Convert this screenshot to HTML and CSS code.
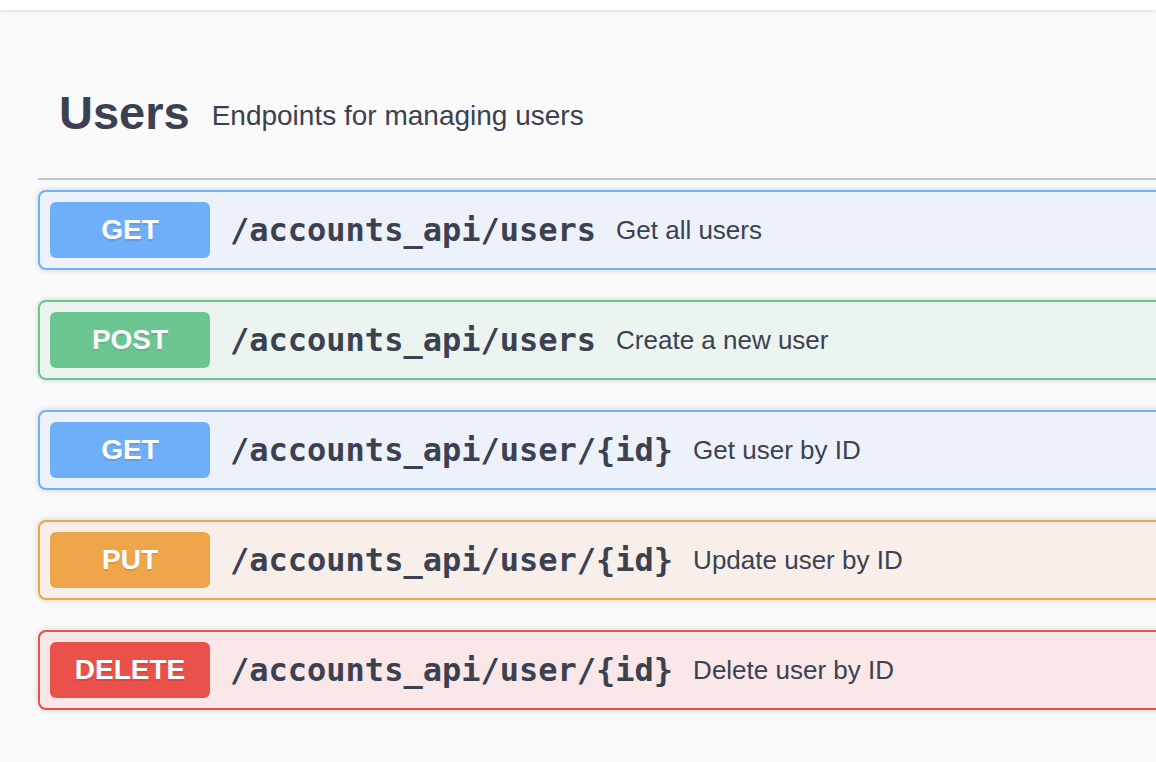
FILE: index.html
```html
<!DOCTYPE html>
<html lang="en">
<head>
<meta charset="utf-8">
<title>Users API</title>
<link rel="stylesheet" href="styles.css">
</head>
<body>
<div class="topbar"></div>
<main class="wrapper">
  <section class="tag-section">
    <div class="tag-header">
      <h3 class="tag-title">Users</h3>
      <span class="tag-desc">Endpoints for managing users</span>
    </div>
    <div class="ops">
      <div class="opblock get">
        <span class="method">GET</span>
        <span class="path">/accounts_api/users</span>
        <span class="summary">Get all users</span>
      </div>
      <div class="opblock post">
        <span class="method">POST</span>
        <span class="path">/accounts_api/users</span>
        <span class="summary">Create a new user</span>
      </div>
      <div class="opblock get">
        <span class="method">GET</span>
        <span class="path">/accounts_api/user/{id}</span>
        <span class="summary">Get user by ID</span>
      </div>
      <div class="opblock put">
        <span class="method">PUT</span>
        <span class="path">/accounts_api/user/{id}</span>
        <span class="summary">Update user by ID</span>
      </div>
      <div class="opblock delete">
        <span class="method">DELETE</span>
        <span class="path">/accounts_api/user/{id}</span>
        <span class="summary">Delete user by ID</span>
      </div>
    </div>
  </section>
</main>
</body>
</html>
```

FILE: styles.css
```css
html, body {
  margin: 0;
  padding: 0;
  overflow: hidden;
  background: #fafafa;
  font-family: "Liberation Sans", Arial, sans-serif;
  color: #3b4151;
}

.topbar {
  position: relative;
  z-index: 1;
  height: 10px;
  background: #ffffff;
  box-shadow: 0 1px 4px rgba(0, 0, 0, 0.13);
}

.wrapper {
  padding-left: 38px;
  overflow: hidden;
}

.tag-section {
  margin-right: -24px;
}

.tag-header {
  display: flex;
  align-items: center;
  padding: 73px 20px 35px 21px;
  border-bottom: 2px solid #c2c3c7;
}

.tag-title {
  margin: 0;
  font-size: 47px;
  line-height: 60px;
  font-weight: 700;
  color: #3b4151;
}

.tag-desc {
  padding: 6px 20px 0 22px;
  font-size: 28px;
  line-height: 40px;
  color: #3b4151;
}

.ops {
  display: flex;
  flex-direction: column;
  gap: 30px;
  padding: 10px 0 40px;
}

.opblock {
  display: flex;
  align-items: center;
  height: 76px;
  padding: 0 10px;
  border: 2px solid;
  border-radius: 8px;
  box-shadow: 0 0 6px rgba(0, 0, 0, 0.17);
}

.method {
  flex: none;
  width: 160px;
  height: 56px;
  border-radius: 6px;
  display: flex;
  align-items: center;
  justify-content: center;
  color: #ffffff;
  font-weight: 700;
  font-size: 28px;
  text-shadow: 0 2px 0 rgba(0, 0, 0, 0.1);
}

.path {
  padding: 0 20px;
  font-family: "DejaVu Sans Mono", "Liberation Mono", monospace;
  font-weight: 700;
  font-size: 32px;
  color: #3b4151;
}

.summary {
  font-size: 26px;
  color: #3b4151;
}

.get { border-color: #6fb0f8; background: #edf2fa; }
.get .method { background: #6faef8; }

.post { border-color: #6dc690; background: #ebf4ee; }
.post .method { background: #6cc692; }

.put { border-color: #efa64b; background: #f9efea; }
.put .method { background: #efa54a; }

.delete { border-color: #e8514b; background: #f9e8e7; }
.delete .method { background: #e9514a; }
```
